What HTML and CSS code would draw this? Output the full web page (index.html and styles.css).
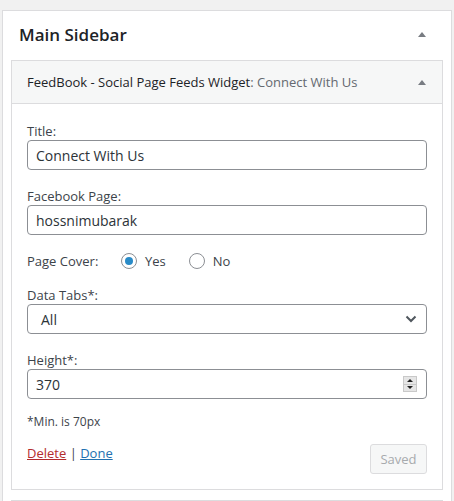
FILE: index.html
```html
<!DOCTYPE html>
<html>
<head>
<meta charset="utf-8">
<link rel="stylesheet" href="styles.css">
</head>
<body>
<div class="sidebar">
  <div class="sidebar-head">
    <h2 class="sidebar-title">Main Sidebar</h2>
    <span class="toggle"></span>
  </div>
  <div class="widget">
    <div class="widget-top">
      <h3 class="widget-title">FeedBook - Social Page Feeds Widget<span class="in-title">: Connect With Us</span></h3>
      <span class="toggle"></span>
    </div>
    <div class="widget-inside">
      <div class="field first">
        <label class="lbl">Title:</label>
        <input class="text-input" type="text" value="Connect With Us">
      </div>
      <div class="field">
        <label class="lbl">Facebook Page:</label>
        <input class="text-input" type="text" value="hossnimubarak">
      </div>
      <div class="radio-row">
        <span class="lbl-inline">Page Cover:</span>
        <span class="radio checked"></span><span class="radio-lbl">Yes</span>
        <span class="radio"></span><span class="radio-lbl">No</span>
      </div>
      <div class="field after-radio">
        <label class="lbl">Data Tabs*:</label>
        <div class="select">
          <span class="select-val">All</span>
          <svg class="chev" width="12" height="8" viewBox="0 0 12 8"><path d="M1.5 1.5 L6 6 L10.5 1.5" fill="none" stroke="#50575e" stroke-width="2"/></svg>
        </div>
      </div>
      <div class="field">
        <label class="lbl">Height*:</label>
        <div class="num-input">
          <span class="num-val">370</span>
          <span class="spinner">
            <span class="spin up"></span>
            <span class="spin down"></span>
          </span>
        </div>
      </div>
      <p class="note">*Min. is 70px</p>
      <div class="actions">
        <div class="links"><a class="del">Delete</a> | <a class="done">Done</a></div>
        <span class="btn">Saved</span>
      </div>
    </div>
  </div>
  <div class="next-widget"></div>
</div>
</body>
</html>
```

FILE: styles.css
```css
html, body {
  margin: 0;
  padding: 0;
}
body {
  background: #f1f1f1;
  font-family: "Open Sans", "Noto Sans", sans-serif;
  font-size: 13px;
  color: #3c434a;
  padding: 10px 2px 0 2px;
  height: 501px;
  box-sizing: border-box;
  overflow: hidden;
}
.sidebar {
  background: #fff;
  border: 1px solid #dcdcde;
  border-bottom: none;
  padding: 0 8px;
  height: 100%;
  box-sizing: border-box;
}
.sidebar-head {
  height: 49px;
  box-sizing: border-box;
  display: flex;
  align-items: center;
  justify-content: space-between;
  padding: 0 17px 3px 8px;
}
.sidebar-title {
  margin: 0;
  font-size: 17px;
  font-weight: 600;
  color: #1d2327;
}
.toggle {
  width: 0;
  height: 0;
  border-left: 4px solid transparent;
  border-right: 4px solid transparent;
  border-bottom: 5px solid #787c82;
}
.widget {
  border: 1px solid #dcdcde;
  background: #fff;
}
.widget-top {
  height: 42px;
  background: #f6f7f7;
  border-bottom: 1px solid #dcdcde;
  display: flex;
  align-items: center;
  justify-content: space-between;
  padding: 0 16px 0 15px;
}
.widget-title {
  margin: 0;
  font-size: 13px;
  font-weight: 400;
  color: #1d2327;
}
.in-title {
  color: #646970;
}
.widget-inside {
  padding: 16px 15px 15px;
}
.field {
  margin-top: 15px;
}
.field.first {
  margin-top: 0;
}
.field.after-radio {
  margin-top: 14px;
}
.lbl {
  display: block;
  line-height: 18px;
  padding-top: 2px;
}
.text-input {
  display: block;
  width: 100%;
  box-sizing: border-box;
  height: 30px;
  border: 1px solid #8c8f94;
  border-radius: 4px;
  padding: 0 8px;
  font-family: inherit;
  font-size: 14px;
  color: #2c3338;
  background: #fff;
  margin: 0;
}
.radio-row {
  display: flex;
  align-items: center;
  height: 18px;
  margin-top: 17px;
}
.lbl-inline {
  width: 94px;
}
.radio {
  width: 16px;
  height: 16px;
  box-sizing: border-box;
  border: 1px solid #8c8f94;
  border-radius: 50%;
  display: flex;
  align-items: center;
  justify-content: center;
  margin-right: 8px;
}
.radio.checked::after {
  content: "";
  width: 8px;
  height: 8px;
  border-radius: 50%;
  background: #2a8bc7;
}
.radio-lbl {
  margin-right: 23px;
  font-size: 13px;
}
.select {
  height: 30px;
  box-sizing: border-box;
  border: 1px solid #8c8f94;
  border-radius: 4px;
  display: flex;
  align-items: center;
  justify-content: space-between;
  padding: 0 9px 0 13px;
  font-size: 14px;
  color: #2c3338;
}
.num-input {
  height: 30px;
  box-sizing: border-box;
  border: 1px solid #8c8f94;
  border-radius: 4px;
  display: flex;
  align-items: center;
  justify-content: space-between;
  padding: 0 9px 0 8px;
  font-size: 14px;
  color: #2c3338;
}
.spinner {
  display: flex;
  flex-direction: column;
  width: 14px;
  height: 16px;
  background: #e6e6e6;
  border: 1px solid #c9c9c9;
  box-sizing: border-box;
}
.spin {
  flex: 1;
  display: flex;
  align-items: center;
  justify-content: center;
}
.spin.up {
  border-bottom: 1px solid #c9c9c9;
}
.spin.up::after {
  content: "";
  border-left: 3px solid transparent;
  border-right: 3px solid transparent;
  border-bottom: 3px solid #222;
}
.spin.down::after {
  content: "";
  border-left: 3px solid transparent;
  border-right: 3px solid transparent;
  border-top: 3px solid #222;
}
.note {
  margin: 15px 0 14px;
  font-size: 12px;
  line-height: 16px;
  color: #3c434a;
}
.actions {
  display: flex;
  justify-content: space-between;
  align-items: flex-start;
}
.links {
  line-height: 18px;
  color: #3c434a;
}
.del {
  color: #b32d2e;
  text-decoration: underline;
}
.done {
  color: #2271b1;
  text-decoration: underline;
}
.btn {
  height: 30px;
  box-sizing: border-box;
  border: 1px solid #dcdcde;
  border-radius: 3px;
  background: #f6f7f7;
  color: #a7aaad;
  display: flex;
  align-items: center;
  font-size: 13px;
  width: 57px;
  justify-content: center;
}
.next-widget {
  margin-top: 10px;
  border-top: 1px solid #dcdcde;
  height: 10px;
}
```
